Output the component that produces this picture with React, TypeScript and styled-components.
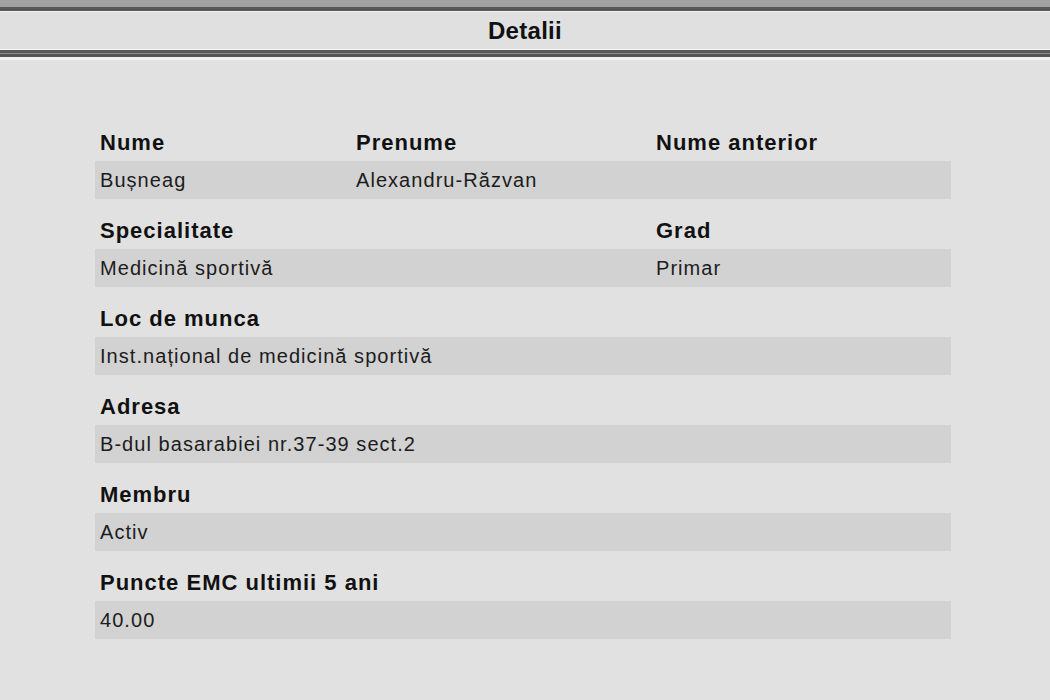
import React from "react";
import styled, { createGlobalStyle } from "styled-components";

const Global = createGlobalStyle`
  html, body { margin: 0; padding: 0; background: #e1e1e1; }
  body { font-family: "Liberation Sans", Arial, sans-serif; color: #111; }
`;

const Page = styled.div`
  width: 1050px;
  min-height: 700px;
  background: #e1e1e1;
  display: flex;
  flex-direction: column;
`;

const TopStrip = styled.div`
  height: 7px;
  background: #a2a2a2;
`;

const Header = styled.header`
  border-top: 4px solid #585858;
  background: #e0e0e0;
`;

const Title = styled.h1`
  margin: 0;
  height: 37px;
  line-height: 38px;
  border-top: 1px solid #f4f4f4;
  border-bottom: 1px solid #f6f6f6;
  text-align: center;
  font-size: 24px;
  font-weight: 700;
  letter-spacing: 0.3px;
  color: #111;
`;

const Divider = styled.div`
  height: 10px;
  background: linear-gradient(
    to bottom,
    #5a5a5a 0px,
    #5a5a5a 3px,
    #8e8e8e 3px,
    #8e8e8e 4px,
    #555555 4px,
    #555555 7px,
    #f2f2f2 7px,
    #f2f2f2 10px
  );
`;

const Content = styled.main`
  padding: 70px 0 0 95px;
  display: flex;
  flex-direction: column;
  gap: 19px;
`;

const Section = styled.section`
  width: 856px;
  display: flex;
  flex-direction: column;
  gap: 5px;
`;

const Grid = styled.div`
  display: grid;
  grid-template-columns: 256px 300px 300px;
`;

const LabelRow = styled(Grid)`
  height: 26px;
`;

const ValueRow = styled(Grid)`
  height: 38px;
  background: #d2d2d2;
`;

const Label = styled.div<{ $span?: number }>`
  grid-column: span ${(p) => p.$span ?? 1};
  padding-left: 5px;
  font-size: 22px;
  line-height: 26px;
  font-weight: 700;
  letter-spacing: 1px;
  color: #111;
  white-space: nowrap;
`;

const Value = styled.div<{ $span?: number }>`
  grid-column: span ${(p) => p.$span ?? 1};
  padding-left: 5px;
  font-size: 20px;
  line-height: 38px;
  letter-spacing: 1.05px;
  color: #1c1c1c;
  white-space: nowrap;
`;

type Cell = { label: string; value: string; span?: number };

const sections: Cell[][] = [
  [
    { label: "Nume", value: "Bușneag" },
    { label: "Prenume", value: "Alexandru-Răzvan" },
    { label: "Nume anterior", value: "" },
  ],
  [
    { label: "Specialitate", value: "Medicină sportivă", span: 2 },
    { label: "Grad", value: "Primar" },
  ],
  [{ label: "Loc de munca", value: "Inst.național de medicină sportivă", span: 3 }],
  [{ label: "Adresa", value: "B-dul basarabiei nr.37-39 sect.2", span: 3 }],
  [{ label: "Membru", value: "Activ", span: 3 }],
  [{ label: "Puncte EMC ultimii 5 ani", value: "40.00", span: 3 }],
];

export default function App() {
  return (
    <Page>
      <Global />
      <TopStrip />
      <Header>
        <Title>Detalii</Title>
      </Header>
      <Divider />
      <Content>
        {sections.map((cells, i) => (
          <Section key={i}>
            <LabelRow>
              {cells.map((c) => (
                <Label key={c.label} $span={c.span}>
                  {c.label}
                </Label>
              ))}
            </LabelRow>
            <ValueRow>
              {cells.map((c) => (
                <Value key={c.label} $span={c.span}>
                  {c.value}
                </Value>
              ))}
            </ValueRow>
          </Section>
        ))}
      </Content>
    </Page>
  );
}
